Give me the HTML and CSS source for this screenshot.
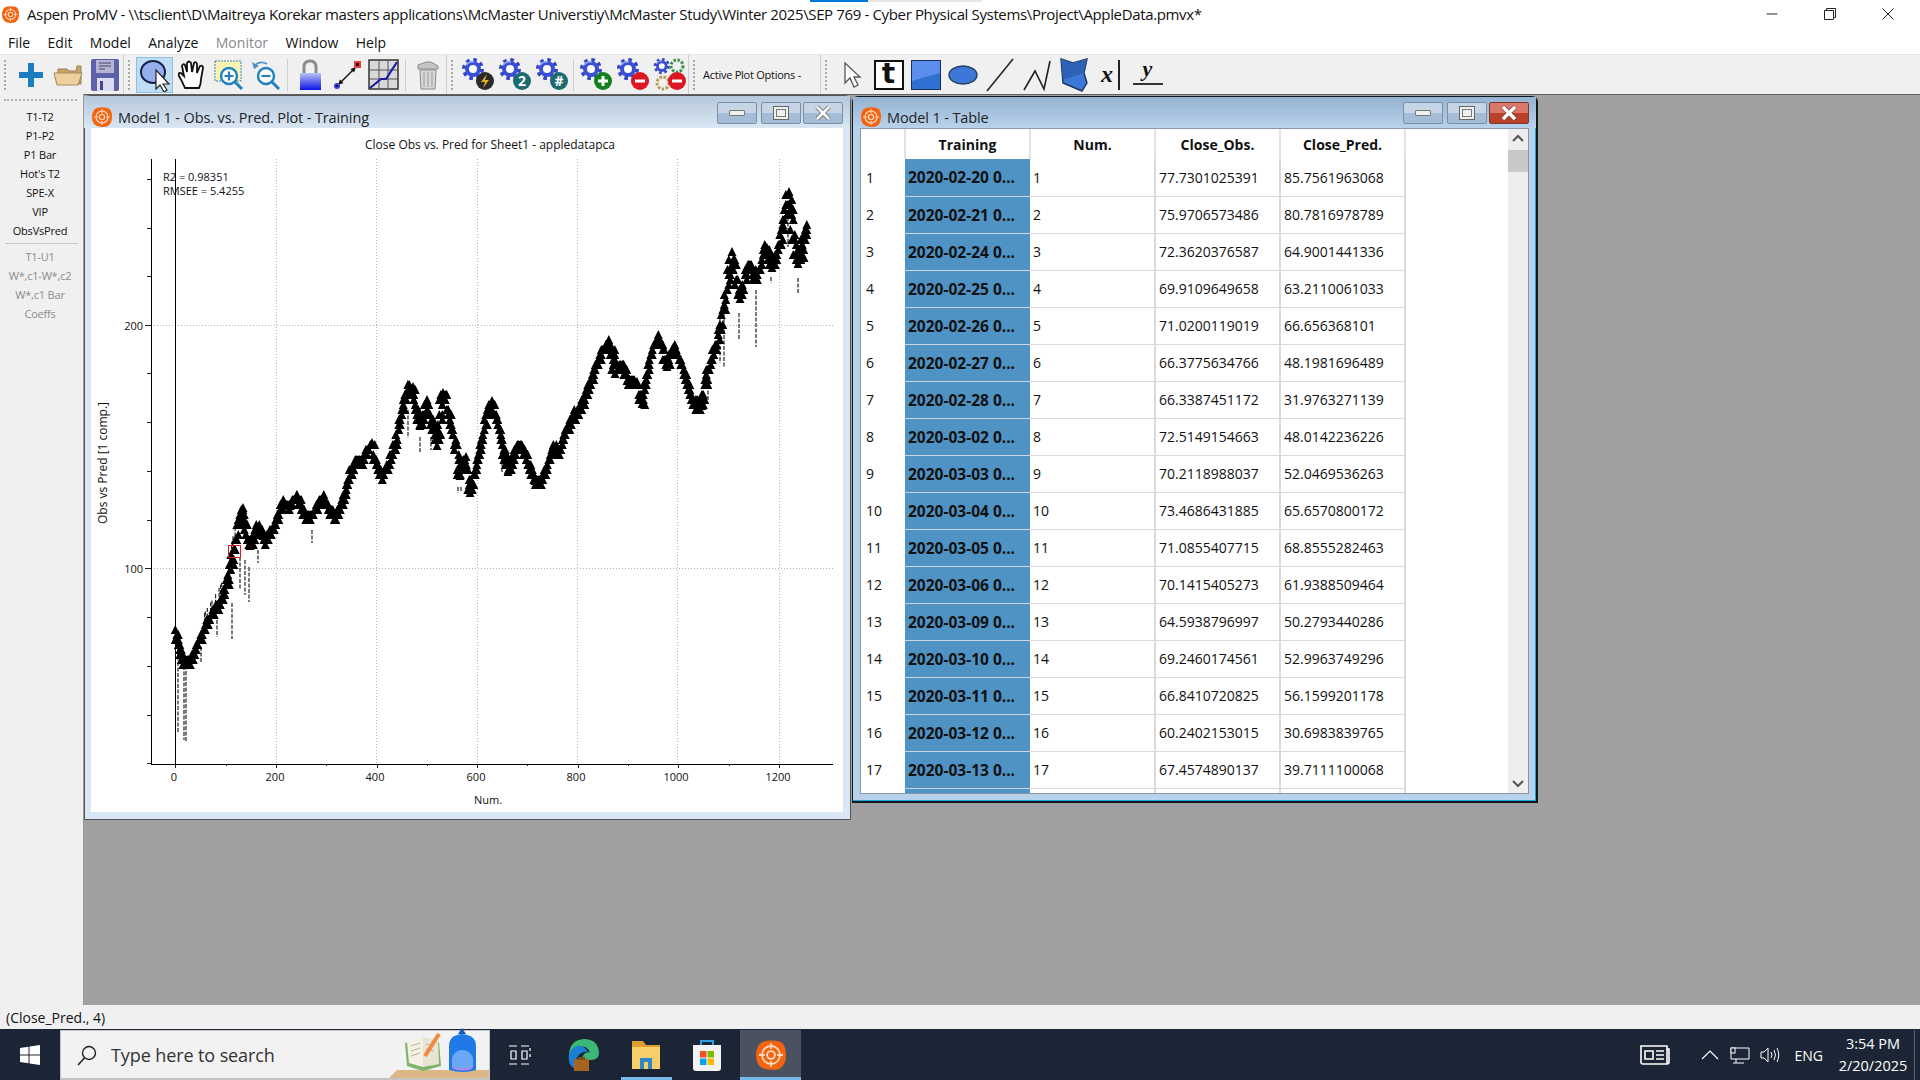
FILE: index.html
```html
<!DOCTYPE html>
<html>
<head>
	<title>Aspen ProMV</title>
	<meta charset="UTF-8">
	<link rel="stylesheet" href="styles.css">
</head>
<body>
	<svg class="defs" width="0" height="0">
		<symbol id="aspen" viewBox="0 0 20 20">
			<path d="M5 1 Q10 -0.5 16 1 Q20 3 20 10 Q20 17 15 19.5 Q10 20.5 5 19 Q0 17 0 10 Q0 3 5 1Z" fill="#f4640f"/>
			<circle cx="10" cy="10" r="6" fill="none" stroke="#ffd9c0" stroke-width="1.2"/>
			<circle cx="10" cy="10" r="2.6" fill="none" stroke="#ffd9c0" stroke-width="1.2"/>
			<path d="M10 2V6M10 14V18M2 10H6M14 10H18" stroke="#ffd9c0" stroke-width="1.2"/>
		</symbol>
		<symbol id="gear" viewBox="0 0 30 30">
			<circle cx="12" cy="11" r="9" fill="none" stroke="#3346c8" stroke-width="4" stroke-dasharray="3.5 3.57"/>
			<circle cx="12" cy="11" r="8" fill="#3a4fd6"/>
			<circle cx="12" cy="11" r="4" fill="#fff"/>
			<path d="M5 7 Q8 3 13 4" fill="none" stroke="#9aa8f0" stroke-width="1.5"/>
		</symbol>
	</svg>

	<div class="titlebar">
		<div class="progress"></div>
		<svg class="app-icon" width="17" height="19"><use href="#aspen"/></svg>
		<span class="title-text">Aspen ProMV - \\tsclient\D\Maitreya Korekar masters applications\McMaster Universtiy\McMaster Study\Winter 2025\SEP 769 - Cyber Physical Systems\Project\AppleData.pmvx*</span>
		<div class="win-controls">
			<svg width="12" height="12" viewBox="0 0 12 12"><path d="M0.5 6H11.5" stroke="#222"/></svg>
			<svg width="12" height="12" viewBox="0 0 12 12"><path d="M0.5 2.5H9.5V11.5H0.5ZM2.5 2.5V0.5H11.5V9.5H9.5" fill="none" stroke="#222"/></svg>
			<svg width="12" height="12" viewBox="0 0 12 12"><path d="M0.5 0.5L11.5 11.5M11.5 0.5L0.5 11.5" stroke="#222"/></svg>
		</div>
	</div>

	<div class="menubar">
		<span>File</span><span>Edit</span><span>Model</span><span>Analyze</span><span class="disabled">Monitor</span><span>Window</span><span>Help</span>
	</div>

	<div class="toolbar">
		<div class="tb-group">
			<i class="grip"></i>
			<div class="tool"><svg width="30" height="30" viewBox="0 0 30 30"><path d="M12 3H18V12H27V18H18V27H12V18H3V12H12Z" fill="#1a7cc2"/></svg></div>
			<div class="tool"><svg width="32" height="30" viewBox="0 0 32 30"><path d="M6 9H15L17 11H24L25 6H29V24H5Z" fill="#c9a468" stroke="#9a8058"/><path d="M2 13H30L26 25H5Z" fill="#efcf9d" stroke="#a58a60"/></svg></div>
			<div class="tool"><svg width="30" height="34" viewBox="0 0 30 34"><path d="M3 1H27Q29 1 29 3V31Q29 33 27 33H3Q1 33 1 31V3Q1 1 3 1Z" fill="#5d60aa"/><rect x="6" y="2" width="18" height="13" fill="#b5b5cf"/><path d="M9 5H21M9 8H21M9 11H15" stroke="#6a6a9a" stroke-width="1.4"/><rect x="7" y="20" width="17" height="13" fill="#dcdcef"/><rect x="10" y="23" width="3" height="9" fill="#44468e"/></svg></div>
		</div>
		<div class="tb-group">
			<i class="grip"></i>
			<div class="tool selected"><svg width="32" height="34" viewBox="0 0 32 34"><ellipse cx="14" cy="14" rx="12" ry="11" fill="#94b0ec" stroke="#16204a" stroke-width="2"/><path d="M17 12V31L21 27L25 34L28 32L24 26H30Z" fill="#fff" stroke="#222" stroke-width="1.2"/></svg></div>
			<div class="tool"><svg width="30" height="32" viewBox="0 0 30 32"><path d="M8 29 Q5 22 2 17 Q1 13 4 14 L7 17 L5 7 Q6 4 8 6 L10 13 L10 4 Q12 1 14 4 L15 13 L17 4 Q19 2 20 5 L20 14 L23 7 Q26 6 26 9 L24 20 Q24 25 22 29Z" fill="#fff" stroke="#111" stroke-width="1.8"/></svg></div>
			<div class="tool"><svg width="30" height="32" viewBox="0 0 30 32"><rect x="1" y="2" width="26" height="20" fill="#f7f4b4" stroke="#3e80b0" stroke-dasharray="2 1"/><circle cx="15" cy="17" r="8" fill="#fff" stroke="#2182bd" stroke-width="2.4"/><path d="M21 23L28 30" stroke="#2182bd" stroke-width="3"/><path d="M10.5 17H19.5M15 12.5V21.5" stroke="#2182bd" stroke-width="2.2"/></svg></div>
			<div class="tool"><svg width="30" height="32" viewBox="0 0 30 32"><circle cx="15" cy="17" r="8" fill="#fff" stroke="#2182bd" stroke-width="2.4"/><path d="M21 23L28 30" stroke="#2182bd" stroke-width="3"/><path d="M10.5 17H19.5" stroke="#2182bd" stroke-width="2.2"/><path d="M3 7 Q9 1 16 5" fill="none" stroke="#4f8fbd" stroke-width="1.6"/><path d="M1 3L3 10L8 7Z" fill="#4f8fbd"/></svg></div>
			<i class="sep"></i>
			<div class="tool"><svg width="26" height="32" viewBox="0 0 26 32"><defs><linearGradient id="lockfill" x1="0" y1="0" x2="0" y2="1"><stop offset="0" stop-color="#b9c4f4"/><stop offset="1" stop-color="#0a14e6"/></linearGradient></defs><path d="M7 15V8Q7 2 13 2Q19 2 19 8V15" fill="none" stroke="#8c8c8c" stroke-width="3"/><rect x="3" y="14" width="21" height="17" fill="url(#lockfill)"/></svg></div>
			<div class="tool"><svg width="30" height="32" viewBox="0 0 30 32"><path d="M9 23L21 11" stroke="#111" stroke-width="1.5"/><path d="M6 26L8 20.5L11.5 24ZM24 8L22 13.5L18.5 10Z" fill="#111"/><circle cx="5" cy="27" r="3" fill="#2f3fd0"/><circle cx="5" cy="27" r="1" fill="#111"/><rect x="22" y="2" width="7" height="7" fill="#f03a3a"/><rect x="24" y="4" width="3" height="3" fill="#111"/></svg></div>
			<div class="tool"><svg width="31" height="31" viewBox="0 0 31 31"><rect x="1" y="1" width="29" height="29" fill="#d9d9d9" stroke="#333" stroke-width="1.5"/><path d="M11 1V30M20 1V30M1 11H30M1 20H30" stroke="#555"/><path d="M2 29L13 20H18L29 3" fill="none" stroke="#1a1aa8" stroke-width="2.2"/></svg></div>
			<i class="sep"></i>
			<div class="tool"><svg width="24" height="30" viewBox="0 0 24 30"><path d="M2 5L10 2H15L22 6L22 9H2Z" fill="#c4c4c4" stroke="#8a8a8a"/><path d="M4 10H20L19 29H5Z" fill="#d8d8d8" stroke="#8a8a8a"/><path d="M8 12V27M12 12V27M16 12V27" stroke="#9a9a9a"/></svg></div>
		</div>
		<div class="tb-group">
			<i class="grip"></i>
			<div class="tool"><svg width="34" height="34" viewBox="0 0 34 34"><use href="#gear" width="30" height="30"/><circle cx="24" cy="23" r="9" fill="#2b2b2b"/><path d="M26 16L20 24H24L22 30L28 22H24Z" fill="#e6b422"/></svg></div>
			<div class="tool"><svg width="34" height="34" viewBox="0 0 34 34"><use href="#gear" width="30" height="30"/><circle cx="24" cy="23" r="9" fill="#1d6a6f"/><text x="24" y="28" class="badge">2</text></svg></div>
			<div class="tool"><svg width="34" height="34" viewBox="0 0 34 34"><use href="#gear" width="30" height="30"/><circle cx="24" cy="23" r="9" fill="#1d6a6f"/><text x="24" y="28" class="badge">#</text></svg></div>
			<i class="sep"></i>
			<div class="tool"><svg width="34" height="34" viewBox="0 0 34 34"><use href="#gear" width="30" height="30"/><circle cx="24" cy="23" r="9" fill="#12801f"/><path d="M19 23H29M24 18V28" stroke="#fff" stroke-width="3"/></svg></div>
			<div class="tool"><svg width="34" height="34" viewBox="0 0 34 34"><use href="#gear" width="30" height="30"/><circle cx="24" cy="23" r="9" fill="#dd1722"/><path d="M19 23H29" stroke="#fff" stroke-width="3"/></svg></div>
			<div class="tool"><svg width="34" height="34" viewBox="0 0 34 34"><use href="#gear" width="22" height="22"/><circle cx="24" cy="8" r="6" fill="none" stroke="#3f8f4a" stroke-width="3" stroke-dasharray="2.5 1.5"/><circle cx="10" cy="25" r="6" fill="none" stroke="#b59a52" stroke-width="3" stroke-dasharray="2.5 1.5"/><circle cx="24" cy="23" r="9" fill="#dd1722"/><path d="M19 23H29" stroke="#fff" stroke-width="3"/></svg></div>
		</div>
		<div class="tb-group plot-options">
			<i class="grip"></i>
			<span>Active Plot Options -</span>
		</div>
		<div class="tb-group">
			<i class="grip"></i>
			<div class="tool"><svg width="20" height="30" viewBox="0 0 20 30"><path d="M3 3V23L8 18L12 27L16 25L12 17H18Z" fill="#fff" stroke="#555" stroke-width="1.3"/></svg></div>
			<div class="tool"><div class="t-icon">t</div></div>
			<div class="tool"><svg width="30" height="30" viewBox="0 0 30 30"><rect x="0.5" y="0.5" width="29" height="29" fill="#2f70d0" stroke="#14315c"/><path d="M1 1H29V13L1 21Z" fill="#5b8dec"/></svg></div>
			<div class="tool"><svg width="30" height="20" viewBox="0 0 30 20"><ellipse cx="15" cy="10" rx="14" ry="9" fill="#3d78d8" stroke="#2a3f5e" stroke-width="1.4"/></svg></div>
			<div class="tool"><svg width="28" height="34" viewBox="0 0 28 34"><path d="M1 33L27 1" stroke="#222" stroke-width="1.6"/></svg></div>
			<div class="tool"><svg width="28" height="34" viewBox="0 0 28 34"><path d="M1 32L12 13L21 31L27 3" fill="none" stroke="#222" stroke-width="1.6"/></svg></div>
			<div class="tool"><svg width="28" height="34" viewBox="0 0 28 34"><path d="M1 1L13 5L27 1L24 15L27 25L22 33L3 25Z" fill="#3d78d8" stroke="#1d3557" stroke-width="1.4"/><path d="M1 1L13 5L27 1L24 15L3 22Z" fill="#2d62b6"/></svg></div>
			<div class="tool var-x"><i>x</i><b></b></div>
			<div class="tool var-y"><i>y</i></div>
		</div>
	</div>

	<div class="main">
		<div class="sidepanel">
			<i class="side-grip"></i>
			<div class="side-item">T1-T2</div>
			<div class="side-item">P1-P2</div>
			<div class="side-item">P1 Bar</div>
			<div class="side-item">Hot's T2</div>
			<div class="side-item">SPE-X</div>
			<div class="side-item">VIP</div>
			<div class="side-item">ObsVsPred</div>
			<div class="side-sep"></div>
			<div class="side-item off">T1-U1</div>
			<div class="side-item off">W*,c1-W*,c2</div>
			<div class="side-item off">W*,c1 Bar</div>
			<div class="side-item off">Coeffs</div>
		</div>

		<div class="mdi">
			<div class="window plot-window">
				<div class="win-title">
					<svg width="20" height="20"><use href="#aspen"/></svg>
					<span>Model 1 - Obs. vs. Pred. Plot - Training</span>
					<div class="win-btns">
						<div class="win-btn"><b class="ic-min"></b></div>
						<div class="win-btn"><b class="ic-max"></b></div>
						<div class="win-btn"><svg width="16" height="16" viewBox="0 0 16 16"><path d="M2 2L14 14M14 2L2 14" stroke="#666" stroke-width="4.4"/><path d="M2 2L14 14M14 2L2 14" stroke="#fff" stroke-width="2.8"/></svg></div>
					</div>
				</div>
				<div class="client" id="plot"></div>
			</div>

			<div class="window table-window">
				<div class="win-title">
					<svg width="20" height="20"><use href="#aspen"/></svg>
					<span>Model 1 - Table</span>
					<div class="win-btns">
						<div class="win-btn"><b class="ic-min"></b></div>
						<div class="win-btn"><b class="ic-max"></b></div>
						<div class="win-btn close"><svg width="18" height="16" viewBox="0 0 18 16"><path d="M3 2L15 14M15 2L3 14" stroke="#7a4a40" stroke-width="4.8"/><path d="M3 2L15 14M15 2L3 14" stroke="#fff" stroke-width="3.2"/></svg></div>
					</div>
				</div>
				<div class="client table-client">
					<div class="table-wrap">
						<table>
							<tr><th class="rowno"></th><th>Training</th><th>Num.</th><th>Close_Obs.</th><th>Close_Pred.</th></tr>
							<tr><td class="rowno">1</td><td class="train">2020-02-20 0...</td><td>1</td><td>77.7301025391</td><td>85.7561963068</td></tr>
							<tr><td class="rowno">2</td><td class="train">2020-02-21 0...</td><td>2</td><td>75.9706573486</td><td>80.7816978789</td></tr>
							<tr><td class="rowno">3</td><td class="train">2020-02-24 0...</td><td>3</td><td>72.3620376587</td><td>64.9001441336</td></tr>
							<tr><td class="rowno">4</td><td class="train">2020-02-25 0...</td><td>4</td><td>69.9109649658</td><td>63.2110061033</td></tr>
							<tr><td class="rowno">5</td><td class="train">2020-02-26 0...</td><td>5</td><td>71.0200119019</td><td>66.656368101</td></tr>
							<tr><td class="rowno">6</td><td class="train">2020-02-27 0...</td><td>6</td><td>66.3775634766</td><td>48.1981696489</td></tr>
							<tr><td class="rowno">7</td><td class="train">2020-02-28 0...</td><td>7</td><td>66.3387451172</td><td>31.9763271139</td></tr>
							<tr><td class="rowno">8</td><td class="train">2020-03-02 0...</td><td>8</td><td>72.5149154663</td><td>48.0142236226</td></tr>
							<tr><td class="rowno">9</td><td class="train">2020-03-03 0...</td><td>9</td><td>70.2118988037</td><td>52.0469536263</td></tr>
							<tr><td class="rowno">10</td><td class="train">2020-03-04 0...</td><td>10</td><td>73.4686431885</td><td>65.6570800172</td></tr>
							<tr><td class="rowno">11</td><td class="train">2020-03-05 0...</td><td>11</td><td>71.0855407715</td><td>68.8555282463</td></tr>
							<tr><td class="rowno">12</td><td class="train">2020-03-06 0...</td><td>12</td><td>70.1415405273</td><td>61.9388509464</td></tr>
							<tr><td class="rowno">13</td><td class="train">2020-03-09 0...</td><td>13</td><td>64.5938796997</td><td>50.2793440286</td></tr>
							<tr><td class="rowno">14</td><td class="train">2020-03-10 0...</td><td>14</td><td>69.2460174561</td><td>52.9963749296</td></tr>
							<tr><td class="rowno">15</td><td class="train">2020-03-11 0...</td><td>15</td><td>66.8410720825</td><td>56.1599201178</td></tr>
							<tr><td class="rowno">16</td><td class="train">2020-03-12 0...</td><td>16</td><td>60.2402153015</td><td>30.6983839765</td></tr>
							<tr><td class="rowno">17</td><td class="train">2020-03-13 0...</td><td>17</td><td>67.4574890137</td><td>39.7111100068</td></tr>
							<tr><td class="rowno"></td><td class="train"></td><td></td><td></td><td></td></tr>
						</table>
					</div>
					<div class="scrollbar">
						<svg width="20" height="14" viewBox="0 0 20 14"><path d="M5 9L10 4L15 9" fill="none" stroke="#555" stroke-width="2"/></svg>
						<div class="thumb"></div>
						<div class="track"></div>
						<svg width="20" height="14" viewBox="0 0 20 14"><path d="M5 5L10 10L15 5" fill="none" stroke="#555" stroke-width="2"/></svg>
					</div>
				</div>
			</div>
		</div>
	</div>

	<div class="statusbar">(Close_Pred., 4)</div>

	<div class="taskbar">
		<div class="start"><svg width="20" height="20" viewBox="0 0 20 20"><path d="M0 3L8.5 1.8V9.5H0ZM9.5 1.6L20 0V9.5H9.5ZM0 10.5H8.5V18.2L0 17ZM9.5 10.5H20V20L9.5 18.4Z" fill="#fff"/></svg></div>
		<div class="search">
			<svg class="lens" width="22" height="22" viewBox="0 0 22 22"><circle cx="13" cy="9" r="6.5" fill="none" stroke="#222" stroke-width="1.4"/><path d="M8.5 14L2 21" stroke="#222" stroke-width="1.6"/></svg>
			<span>Type here to search</span>
			<svg class="search-art" width="100" height="50" viewBox="0 0 100 50"><path d="M0 50L8 42H100V50Z" fill="#dcb887"/><path d="M16 15L34 11L50 14L52 38L34 43L18 38Z" fill="#7fb36a"/><path d="M18 14L34 9V39L20 35Z" fill="#f4f0e4"/><path d="M34 9L49 12L50 36L34 39Z" fill="#e8e4d4"/><path d="M22 18L31 15M22 23L31 20M22 28L31 25M37 16L45 18M37 21L45 23" stroke="#b9b4a0"/><path d="M36 28L50 6" stroke="#f08a3c" stroke-width="4"/><path d="M60 42V18Q60 7 73 6Q87 7 87 18V42Q74 46 60 42Z" fill="#1f7ae8"/><path d="M73 0L77 6H69Z" fill="#1559b8"/><path d="M63 40V30Q66 22 73 22Q81 22 84 30V40Z" fill="#6aa8f5"/><path d="M64 38Q73 42 83 38V41Q73 44 64 41Z" fill="#a98bf0"/></svg>
		</div>
		<div class="task-item task-view"><svg width="22" height="20" viewBox="0 0 22 20"><path d="M0 1H8M0 19H8M2 6H7V14H2ZM12 1H20M12 19H20M13 6H18V14H13ZM21 3V6M21 9V12" fill="none" stroke="#fff" stroke-width="1.2"/></svg></div>
		<div class="task-item edge"><svg width="32" height="34" viewBox="0 0 32 34"><path d="M1 16Q2 2 16 1Q30 1 31 15Q31 22 23 22H14Q14 14 22 14Q18 7 11 9Q3 12 1 16Z" fill="#3bb878"/><path d="M1 16Q-1 28 9 32Q5 24 10 18Q14 13 20 14Q14 5 7 9Q3 11 1 16Z" fill="#1c7fd6"/><rect x="6" y="21" width="15" height="12" fill="#a5641f"/><rect x="10" y="19" width="7" height="3" fill="#7b4a14"/></svg></div>
		<div class="task-item active-app"><svg width="30" height="32" viewBox="0 0 30 32"><path d="M1 2H12L15 6H29V30H1Z" fill="#e0a030"/><path d="M1 8H29V30H1Z" fill="#f5cf6a"/><path d="M9 30V19H21V30H17V23H13V30Z" fill="#2f86c8"/></svg></div>
		<div class="task-item store"><svg width="30" height="34" viewBox="0 0 30 34"><path d="M9 8V3H21V8" fill="none" stroke="#29a3e8" stroke-width="2"/><path d="M1 7H29V30Q29 33 26 33H4Q1 33 1 30Z" fill="#f3f3f3"/><rect x="8" y="13" width="6.5" height="6.5" fill="#f25022"/><rect x="15.5" y="13" width="6.5" height="6.5" fill="#7fba00"/><rect x="8" y="20.5" width="6.5" height="6.5" fill="#00a4ef"/><rect x="15.5" y="20.5" width="6.5" height="6.5" fill="#ffb900"/></svg></div>
		<div class="task-item running"><svg width="30" height="30"><use href="#aspen"/></svg></div>
		<div class="tray">
			<svg class="tray-news" width="30" height="20" viewBox="0 0 30 20"><path d="M1 1H27V19H3Q1 19 1 17ZM27 4H29V17Q29 19 27 19" fill="none" stroke="#fff" stroke-width="1.6"/><path d="M5 6H13V14H5Z M16 6H24M16 10H24M16 14H24" fill="none" stroke="#fff" stroke-width="1.6"/></svg>
			<svg class="tray-up" width="18" height="10" viewBox="0 0 18 10"><path d="M1 9L9 1L17 9" fill="none" stroke="#fff" stroke-width="1.2"/></svg>
			<svg class="tray-net" width="20" height="17" viewBox="0 0 20 17"><path d="M1 1H19V12H1ZM6 12V16M3 16H14" fill="none" stroke="#fff"/><rect x="1" y="1" width="4" height="5" fill="#1a2230" stroke="#fff"/></svg>
			<svg class="tray-vol" width="20" height="16" viewBox="0 0 20 16"><path d="M1 5H4L8 1V15L4 11H1Z" fill="none" stroke="#fff"/><path d="M11 5Q13 8 11 11M14 3Q17 8 14 13M17 1Q20.5 8 17 15" fill="none" stroke="#fff"/></svg>
			<span class="tray-lang">ENG</span>
			<div class="clock"><div>3:54 PM</div><div>2/20/2025</div></div>
			<i class="show-desktop"></i>
		</div>
	</div>

	<script src="plot.js"></script>
</body>
</html>
```

FILE: styles.css
```css
* {
	box-sizing: border-box;
}

body {
	margin: 0;
	width: 1920px;
	height: 1080px;
	overflow: hidden;
	display: flex;
	flex-direction: column;
	background-color: #f0f0f0;
	font-family: "Open Sans", "Noto Sans", sans-serif;
	color: #111;
}

.defs {
	position: absolute;
}

/* top of the app */
.titlebar {
	height: 28px;
	background-color: #fff;
	display: flex;
	align-items: center;
	padding-left: 2px;
	position: relative;
	font-size: 15px;
}

.progress {
	position: absolute;
	left: 810px;
	top: 0;
	width: 172px;
	height: 2px;
	background: linear-gradient(to right, #0078d7 34%, #e6e6e6 34%);
}

.app-icon {
	margin-right: 8px;
}

.title-text {
	white-space: nowrap;
	letter-spacing: -0.36px;
}

.win-controls {
	margin-left: auto;
	display: flex;
	gap: 46px;
	padding-right: 26px;
}

.menubar {
	height: 26px;
	background-color: #fff;
	display: flex;
	align-items: center;
	gap: 17.4px;
	padding: 2px 0 0 8px;
	font-size: 14px;
}

.menubar .disabled {
	color: #8a8a8a;
}

.toolbar {
	height: 40px;
	background-color: #f0f0f0;
	display: flex;
	border-top: 1px solid #e6e6e6;
}

.tb-group {
	display: flex;
	align-items: center;
	border-right: 1px solid #cfcfcf;
}

.tb-group:last-child {
	border-right: none;
}

.grip {
	width: 12px;
	height: 30px;
	margin-left: 4px;
	margin-right: -4px;
	border-left: 2px dotted #a8a8a8;
	flex: none;
}

.tool {
	width: 37px;
	height: 36px;
	flex: none;
	display: flex;
	align-items: center;
	justify-content: center;
}

.tool.selected {
	background-color: #bfddf4;
	border: 1px solid #8fbfe2;
}

.sep {
	width: 7px;
	height: 32px;
	flex: none;
	background: linear-gradient(to right, transparent 3px, #cfcfcf 3px, #cfcfcf 4px, transparent 4px);
}

.badge {
	font-family: "Open Sans", sans-serif;
	font-size: 14px;
	font-weight: 700;
	fill: #fff;
	text-anchor: middle;
}

.plot-options {
	width: 132px;
	font-size: 11px;
	white-space: nowrap;
}

.plot-options span {
	margin-left: 2px;
	letter-spacing: -0.25px;
}

.t-icon {
	width: 30px;
	height: 30px;
	border: 2px solid #111;
	background-color: #fff;
	font-family: "DejaVu Sans", sans-serif;
	font-weight: 700;
	font-size: 28px;
	line-height: 24px;
	text-align: center;
}

.var-x i {
	font-family: "Liberation Serif", serif;
	font-weight: 700;
	font-size: 24px;
}

.var-x b {
	width: 2px;
	height: 30px;
	background-color: #222;
	margin-left: 5px;
}

.var-y {
	align-items: flex-start;
}

.var-y i {
	display: block;
	width: 30px;
	height: 26px;
	border-bottom: 2px solid #333;
	margin-top: 2px;
	text-align: center;
	font-family: "Liberation Serif", serif;
	font-weight: 700;
	font-size: 22px;
	line-height: 20px;
}

/* left panel and the MDI area */
.main {
	height: 911px;
	display: flex;
	flex: none;
}

.sidepanel {
	width: 84px;
	flex: none;
	background-color: #f0f0f0;
	border-right: 1px solid #9a9a9a;
	padding-top: 12.5px;
	position: relative;
	font-size: 11px;
	letter-spacing: -0.2px;
	text-align: center;
}

.side-grip {
	position: absolute;
	left: 4px;
	right: 6px;
	top: 5px;
	border-top: 2px dotted #b4b4b4;
}

.side-item {
	height: 19px;
	line-height: 19px;
	white-space: nowrap;
	padding-right: 3px;
}

.side-item.off {
	color: #8c8c8c;
}

.side-sep {
	height: 1px;
	margin: 3px 5px 3px 5px;
	background-color: #c8c8c8;
}

.mdi {
	flex: 1;
	position: relative;
	background-color: #a0a0a0;
	border-top: 1px solid #5f5f5f;
}

.window {
	position: absolute;
	display: flex;
	flex-direction: column;
	border: 1px solid #555;
	border-radius: 6px 6px 0 0;
}

.plot-window {
	left: 0;
	top: 0;
	width: 767px;
	height: 725px;
	background-color: #d9e6f3;
	padding: 0 7px 7px 6px;
}

.table-window {
	left: 768px;
	top: 1px;
	width: 686px;
	height: 707px;
	background-color: #b9d2ec;
	border: 2px solid #0e1a22;
	border-left-width: 1px;
	border-top-width: 1px;
	box-shadow: inset -1px -1px 0 #1aa5d8;
	padding: 0 7px 7px 7px;
}

.win-title {
	height: 32px;
	flex: none;
	display: flex;
	align-items: center;
	gap: 6px;
	font-size: 14.5px;
	letter-spacing: -0.12px;
	color: #222;
	margin: 0 -7px;
	padding: 10px 7px 0 8px;
	background: linear-gradient(to bottom, #b6c8dc, #d9e6f3);
}

.table-window .win-title {
	height: 31px;
	padding-top: 9px;
	background: linear-gradient(to bottom, #95b2d0, #b9d2ec);
}

.win-title svg {
	flex: none;
}

.win-btns {
	margin-left: auto;
	align-self: flex-start;
	display: flex;
	margin-top: -4px;
}

.win-btn {
	width: 40px;
	height: 22px;
	border: 1px solid #7a8ea6;
	border-radius: 2px;
	background: linear-gradient(to bottom, #c6d5e6 50%, #a4bcd6 50%);
	display: flex;
	align-items: center;
	justify-content: center;
	margin-right: 4px;
}

.win-btn:last-child {
	margin-right: 0;
	margin-left: -2px;
}

.win-btn.close {
	background: linear-gradient(to bottom, #d9786a 50%, #b8412a 50%);
	border-color: #7a3a30;
}

.ic-min {
	width: 16px;
	height: 6px;
	background-color: #f0f0f0;
	border: 1px solid #777;
	border-radius: 1px;
}

.ic-max {
	width: 16px;
	height: 14px;
	background-color: #f0f0f0;
	border: 1px solid #666;
	box-shadow: inset 0 0 0 2px #f0f0f0, inset 0 0 0 3px #777;
}

.client {
	flex: 1;
	background-color: #fff;
	min-height: 0;
}

#plot svg {
	display: block;
}

.plot-text {
	font-family: "Open Sans", sans-serif;
	font-size: 11px;
	fill: #111;
}

.plot-text.big {
	font-size: 12px;
}

/* table window */
.table-client {
	display: flex;
	border: 1px solid #8a97a6;
}

.table-wrap {
	flex: 1;
	overflow: hidden;
}

table {
	border-collapse: collapse;
	table-layout: fixed;
	width: 545px;
	font-size: 14px;
}

th {
	width: 125px;
	height: 30px;
	font-weight: 700;
	border-right: 2px solid #e2e2e2;
	text-align: center;
	padding: 0;
}

th.rowno,
td.rowno {
	width: 44px;
}

td {
	height: 37px;
	padding: 0 0 0 3px;
	border-right: 2px solid #dadada;
	border-bottom: 1px solid #dadada;
	white-space: nowrap;
}

td.rowno {
	padding-left: 5px;
	border-bottom: none;
	border-right: none;
}

td.train {
	background-color: #4f93c4;
	font-size: 15.5px;
	font-weight: 700;
	border-bottom: 1px solid #c6d6e2;
	border-right: none;
}

.scrollbar {
	width: 20px;
	flex: none;
	background-color: #eee;
	display: flex;
	flex-direction: column;
	padding-top: 3px;
	padding-bottom: 3px;
}

.scrollbar svg {
	flex: none;
}

.thumb {
	height: 22px;
	margin-top: 4px;
	background-color: #c8c8c8;
	flex: none;
}

.track {
	flex: 1;
}

/* bottom */
.statusbar {
	height: 24px;
	flex: none;
	background-color: #f0f0f0;
	font-size: 14px;
	line-height: 26px;
	padding-left: 6px;
}

.taskbar {
	height: 51px;
	flex: none;
	background-color: #1c2535;
	display: flex;
	align-items: stretch;
	color: #fff;
	border-top: 1px solid #1c2535;
}

.start {
	width: 60px;
	flex: none;
	display: flex;
	align-items: center;
	justify-content: center;
}

.search {
	width: 430px;
	flex: none;
	background-color: #f2f2f2;
	border: 1px solid #c4c4c4;
	border-bottom-width: 2px;
	display: flex;
	align-items: center;
	position: relative;
	color: #333;
	font-size: 18px;
	letter-spacing: -0.1px;
}

.lens {
	margin-left: 15px;
	margin-right: 13px;
}

.search-art {
	position: absolute;
	right: 0;
	bottom: 0;
}

.task-item {
	width: 61px;
	flex: none;
	display: flex;
	align-items: center;
	justify-content: center;
	position: relative;
}

.task-view {
	width: 60px;
}

.edge {
	width: 68px;
}

.active-app {
	width: 56px;
}

.store {
	width: 66px;
}

.active-app::after,
.running::after {
	content: "";
	position: absolute;
	left: 3px;
	right: 2px;
	bottom: 0;
	height: 3px;
	background-color: #76b9ed;
}

.running {
	background-color: #4a5160;
}

.running::after {
	left: 0;
	right: 0;
}

.tray {
	margin-left: auto;
	display: flex;
	align-items: center;
	font-size: 14px;
	padding-right: 5px;
}

.tray-news {
	margin-right: 31px;
}

.tray-up {
	margin-right: 11px;
}

.tray-net {
	margin-right: 10px;
}

.tray-vol {
	margin-right: 15px;
}

.tray-lang {
	margin-right: 11px;
}

.clock {
	text-align: center;
	line-height: 22px;
	width: 78px;
	margin-right: 2px;
	font-size: 14.5px;
	white-space: nowrap;
}

.show-desktop {
	width: 1px;
	height: 100%;
	background-color: #5c6472;
}
```

FILE: plot.js
```js
// Obs vs Pred scatter, drawn in page pixels so the numbers are easy to check
var NS = "http://www.w3.org/2000/svg";
var holder = document.getElementById("plot");
var svg = document.createElementNS(NS, "svg");
svg.setAttribute("width", holder.clientWidth);
svg.setAttribute("height", holder.clientHeight);
var box = holder.getBoundingClientRect();
svg.setAttribute("viewBox", box.left + " " + box.top + " " + box.width + " " + box.height);
holder.appendChild(svg);

function add(tag, attrs, text) {
	var el = document.createElementNS(NS, tag);
	for (var k in attrs) {
		el.setAttribute(k, attrs[k]);
	}
	if (text) {
		el.textContent = text;
	}
	svg.appendChild(el);
	return el;
}

var left = 151, right = 833, top_ = 159, bottom = 764, zeroX = 175.3;

// gridlines
var xMajor = [276, 376, 477, 577, 677, 779];
xMajor.forEach(function (x) {
	add("path", { d: "M" + (x + 0.5) + " " + top_ + "V" + bottom, stroke: "#b4b4b4", "stroke-dasharray": "1 2" });
});
[325, 568].forEach(function (y) {
	add("path", { d: "M" + left + " " + (y + 0.5) + "H" + right, stroke: "#b4b4b4", "stroke-dasharray": "1 2" });
});

// axes and ticks
var ticks = "";
[179, 228, 276, 325, 373, 422, 471, 520, 568, 617, 666, 715, 763].forEach(function (y) {
	var len = (y === 325 || y === 568) ? 6 : 4;
	ticks += "M" + (left - len) + " " + (y + 0.5) + "H" + left;
});
for (var i = 0; i <= 12; i++) {
	var tx = Math.round(zeroX + i * 50.3);
	ticks += "M" + (tx + 0.5) + " " + bottom + "v" + (i % 2 ? 2 : 4);
}
add("path", { d: ticks, stroke: "#222" });
add("path", { d: "M" + (left + 0.5) + " " + top_ + "V" + (bottom + 1) + "M" + left + " " + (bottom + 0.5) + "H" + right, stroke: "#000", "stroke-width": 1 });
add("path", { d: "M175.5 " + top_ + "V" + bottom, stroke: "#000" });

// labels
function label(x, y, str, anchor, cls) {
	return add("text", { x: x, y: y, "class": "plot-text " + (cls || ""), "text-anchor": anchor || "middle" }, str);
}
label(490, 149, "Close Obs vs. Pred for Sheet1 - appledatapca", "middle", "big");
label(163, 181, "R2 = 0.98351", "start");
label(163, 195, "RMSEE = 5.4255", "start");
label(143, 330, "200", "end");
label(143, 573, "100", "end");
["0", "200", "400", "600", "800", "1000", "1200"].forEach(function (s, n) {
	label(n === 0 ? 174 : xMajor[n - 1] - 1, 781, s);
});
label(488, 804, "Num.");
add("text", { x: 0, y: 0, "class": "plot-text big", "text-anchor": "middle", transform: "translate(107 463) rotate(-90)" }, "Obs vs Pred [1 comp.]");

// the trace, read off as x/y pairs
var trace = [175,627, 178,640, 182,655, 186,668, 190,660, 195,650, 200,640, 205,628, 211,618, 217,608,
	222,598, 227,588, 230,572, 233,552, 238,530, 243,503, 246,535, 250,550, 257,523, 263,540, 272,535,
	278,515, 283,500, 290,510, 297,490, 302,510, 308,522, 315,510, 323,497, 330,510, 337,517, 343,500,
	348,483, 353,460, 363,463, 372,438, 375,463, 382,478, 392,457, 400,423, 406,388, 413,382, 420,430,
	427,395, 437,450, 443,388, 450,420, 455,437, 460,480, 466,452, 470,497, 476,465, 483,437, 488,412,
	492,396, 496,420, 500,425, 503,443, 508,476, 517,443, 525,450, 530,467, 535,485, 545,478, 553,442,
	558,458, 570,420, 580,410, 588,390, 600,357, 606,345, 612,343, 615,378, 623,360, 627,385, 637,377,
	642,408, 648,362, 654,345, 660,336, 667,371, 673,343, 680,362, 687,378, 690,400, 702,410, 708,367,
	714,352, 720,335, 723,312, 728,278, 732,247, 736,285, 740,303, 748,260, 755,283, 761,260, 767,243,
	772,272, 780,245, 786,210, 789,187, 792,222, 795,255, 798,268, 802,235, 804,262, 806,225, 808,218];

function yAt(x) {
	if (x < 175) return trace[1];
	for (var j = 0; j < trace.length - 2; j += 2) {
		if (x <= trace[j + 2]) {
			var f = (x - trace[j]) / (trace[j + 2] - trace[j]);
			return trace[j + 1] + f * (trace[j + 3] - trace[j + 1]);
		}
	}
	return trace[trace.length - 1];
}

function rnd(n) {
	var s = Math.sin(n * 12.9898) * 43758.5453;
	return s - Math.floor(s);
}

// predicted values dip below the observed ones in a few places
var dips = [[178,640,733], [184,655,740], [186,660,742], [201,647,663], [217,620,637],
	[232,603,639], [240,557,590], [245,560,595], [249,567,602], [258,550,563], [312,530,543], [408,410,438],
	[420,437,453], [431,437,450], [458,487,493], [461,487,492], [502,457,472], [708,385,400], [720,313,363],
	[724,313,368], [739,313,339], [756,290,347], [771,277,283], [788,217,247], [798,278,293]];
var dashes = "";
dips.forEach(function (d) {
	dashes += "M" + d[0] + " " + d[1] + "V" + d[2];
});
// short ones poking out of the band on the first climb
for (var m = 0; m < 16; m++) {
	var dx = 196 + rnd(m + 500) * 40;
	var dy = yAt(dx);
	dashes += "M" + dx.toFixed(1) + " " + (dy - 16).toFixed(1) + "v12";
}
add("path", { d: dashes, fill: "none", stroke: "#222", "stroke-width": 1.2, "stroke-dasharray": "4 1.5" });

// markers every 1.5px, spread over the local range of the trace, stepped so they stack like the real ones
function triangle(x, tipY) {
	return "M" + x.toFixed(1) + " " + tipY.toFixed(1) + "l4.5 9h-9z";
}
var tri = "";
var n = 0;
for (var x = zeroX; x < 808; x += 1.5) {
	var lo = 9999, hi = 0;
	for (var w = -3; w <= 3; w++) {
		var v = yAt(Math.min(x + w, 808));
		if (v < lo) lo = v;
		if (v > hi) hi = v;
	}
	if (hi - lo < 18) {
		var mid = (hi + lo) / 2;
		lo = mid - 9;
		hi = mid + 9;
	}
	for (var c = 0; c < 3; c++) {
		var tip = lo + rnd(n++) * (hi - lo - 9);
		tip = Math.round(tip / 5) * 5;
		tri += triangle(x, tip);
	}
}
// every bend of the trace gets its own marker so peaks and troughs reach the right height
for (var a = 0; a < trace.length; a += 2) {
	var prev = trace[a - 1] || trace[a + 1], next = trace[a + 3] || trace[a + 1];
	if (trace[a + 1] < prev && trace[a + 1] < next) tri += triangle(trace[a], trace[a + 1]);
	if (trace[a + 1] > prev && trace[a + 1] > next) tri += triangle(trace[a], trace[a + 1] - 9);
}
add("path", { d: tri, fill: "#000" });

add("rect", { x: 228.5, y: 545.5, width: 12, height: 12, fill: "none", stroke: "#e01818" });
```
